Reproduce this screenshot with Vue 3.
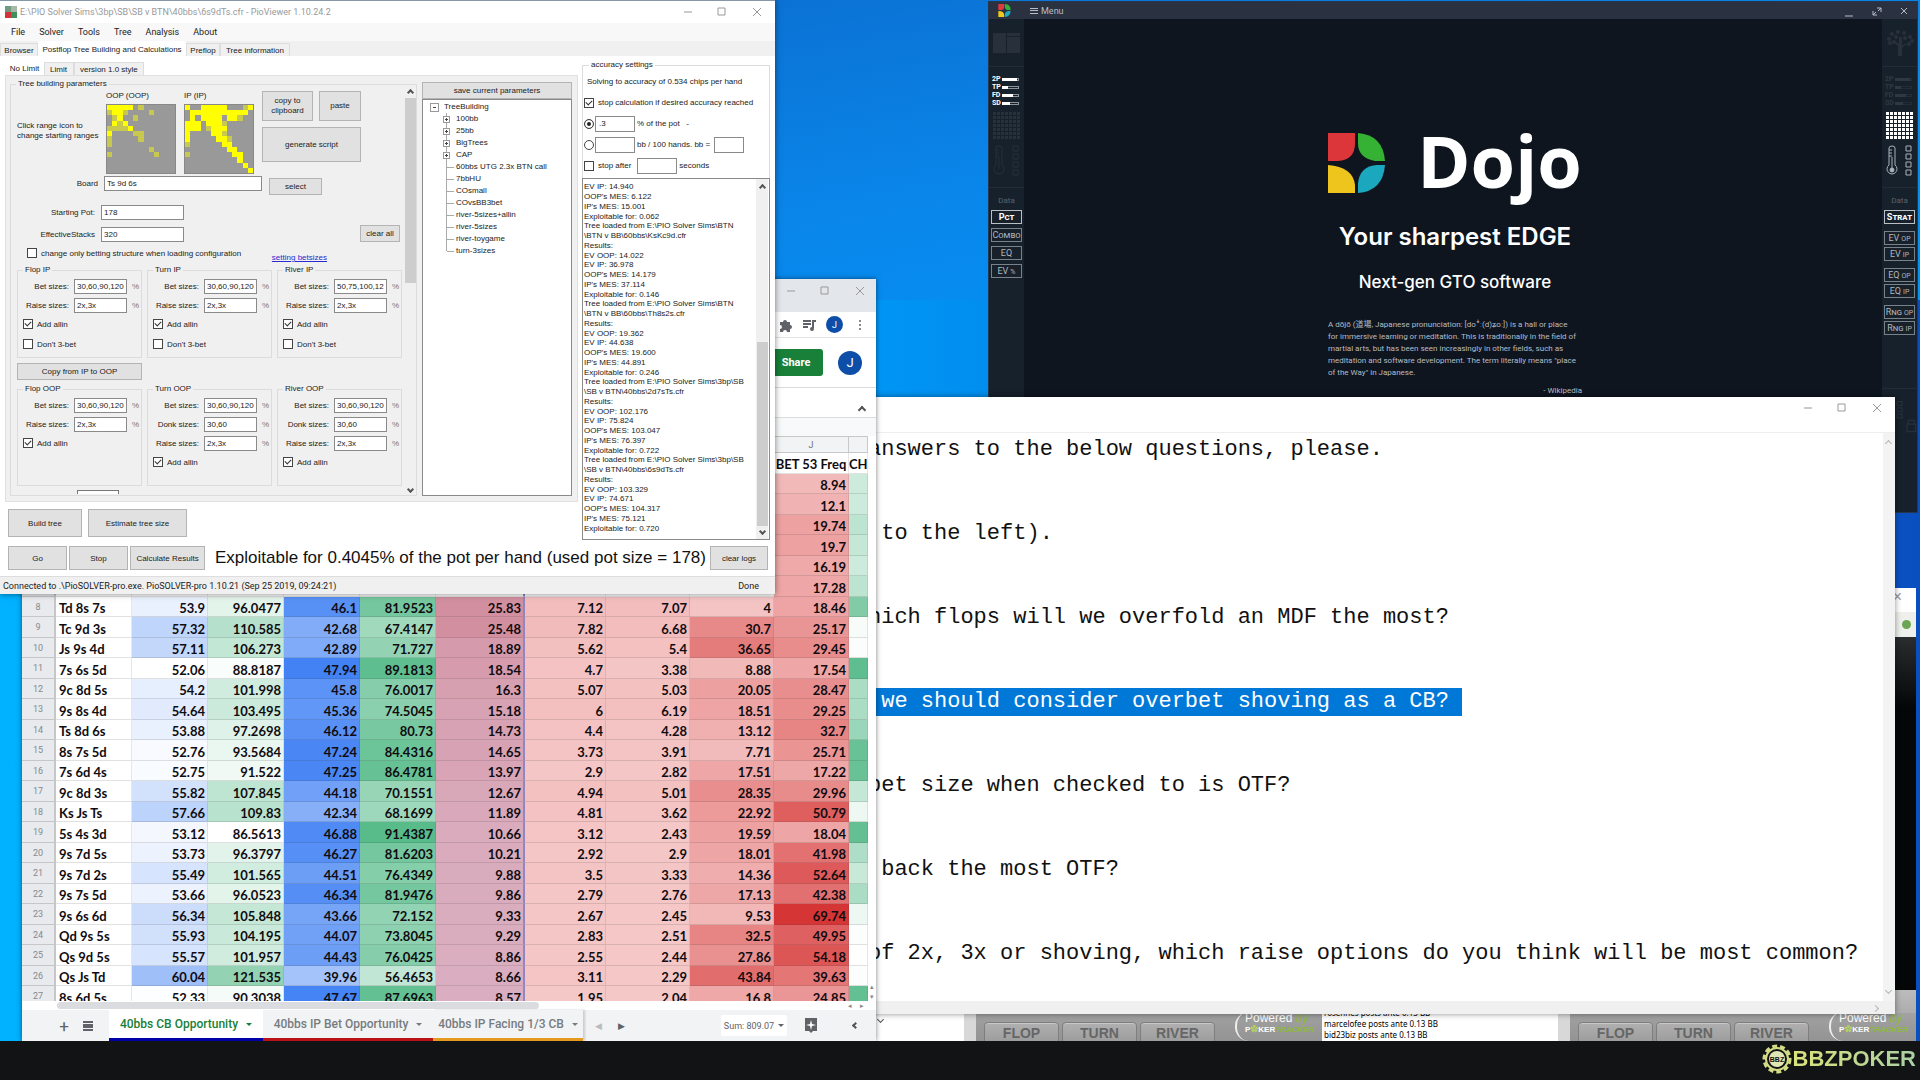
<template>
  <div class="screen">
    <main class="desktop">
      <!-- Dojo -->
      <section class="dojo">
        <header class="dojo-bar">
          <svg class="dojo-mini" viewBox="0 0 57 60">
            <path d="M0 0h27v14q0 14-16 14H0z" fill="#e0393e" />
            <path d="M30 0q27 2 27 28H44Q30 26 30 10z" fill="#35b233" />
            <path d="M0 32q27 0 27 20v8H0z" fill="#f0c71c" />
            <path d="M57 32q-1 26-27 28V50q0-16 16-18z" fill="#1ba9bd" />
          </svg>
          <button class="dojo-menu"><span class="burger"></span>Menu</button>
          <div class="dojo-controls">
            <svg viewBox="0 0 64 14"><path d="M1 12h8" /><path d="M33 4h4v4M37 4l-3 3M29 7v4h4M29 11l3-3" stroke-width="1" /><path d="M59 3l6 6M65 3l-6 6" transform="translate(-2 1)" /></svg>
          </div>
        </header>
        <div class="dojo-body">
          <aside class="side">
            <div class="side-top"><svg viewBox="0 0 28 20" class="dim"><path d="M0 0h13v20H0zM14 0h13v3H14zM14 4h13v16H14z" /></svg></div>
            <div class="side-mid">
              <ul class="strength">
                <li v-for="s in strengths" :key="s.name"><span>{{ s.name }}</span><i><b :style="{ width: s.fill + 'px' }"></b></i></li>
              </ul>
              <div class="matrix dim-matrix"></div>
              <svg class="thermo dim-line" viewBox="0 0 28 31"><path :d="thermoPath" /></svg>
            </div>
            <div class="side-data">
              <p>Data</p>
              <button v-for="(b, i) in leftData" :key="b" class="data-btn" :class="{ active: i === 0 }">{{ b }}<small v-if="b === 'EV'">%</small></button>
            </div>
          </aside>
          <div class="dojo-main">
            <div class="brand">
              <svg viewBox="0 0 57 60">
                <path d="M0 0h27v10q0 17-17 18H0z" fill="#dc363b" />
                <path d="M30 0q25 2 27 28H47Q30 25 30 10z" fill="#35b233" />
                <path d="M0 32q25 2 27 20v8H0z" fill="#eec51d" />
                <path d="M57 32q-2 26-27 28V50q2-17 19-18z" fill="#1ba7bd" />
              </svg>
              <h1>Dojo</h1>
            </div>
            <h2>Your sharpest EDGE</h2>
            <h3>Next-gen GTO software</h3>
            <div class="wiki">
              A dōjō (道場, Japanese pronunciation: [doꜜː(d)ʑoː]) is a hall or place<br>
              for immersive learning or meditation. This is traditionally in the field of<br>
              martial arts, but has been seen increasingly in other fields, such as<br>
              meditation and software development. The term literally means "place<br>
              of the Way" in Japanese.
              <p>- Wikipedia</p>
            </div>
          </div>
          <aside class="side">
            <div class="side-top"><svg viewBox="0 0 28 28" class="dim tree-icon"><path d="M12 27h4v-8l5-4-1-1-4 3V8h-3v7l-5-4-1 1 5 5z" /><circle v-for="(c, i) in leaves" :key="i" :cx="c[0]" :cy="c[1]" r="2" /></svg></div>
            <div class="side-mid">
              <ul class="strength faint">
                <li v-for="s in strengths" :key="s.name"><span>{{ s.name }}</span><i><b :style="{ width: s.fill + 'px' }"></b></i></li>
              </ul>
              <div class="matrix"></div>
              <svg class="thermo" viewBox="0 0 28 31"><path :d="thermoPath" /><circle cx="7" cy="25" r="2" fill="#aab2ba" /></svg>
            </div>
            <div class="side-data right">
              <p>Data</p>
              <button v-for="(b, i) in rightData" :key="b.join()" class="data-btn" :class="{ active: i === 0, spaced: i % 2 === 1 }">{{ b[0] }}<small v-if="b[1]">{{ b[1] }}</small></button>
            </div>
            <div class="side-foot"><svg viewBox="0 0 28 30" fill="none" stroke="#26303b"><path d="M12 2h4v3h-4zM12 7h4v3h-4zM12 12h4v3h-4zM20 20h7v6h-7zM21 20v-3h5v3" /></svg></div>
          </aside>
        </div>
      </section>

      <!-- poker client behind the notes -->
      <section class="client">
        <header>×</header>
        <div class="client-tools"><span></span></div>
        <div class="client-felt"></div>
        <div class="client-base"></div>
      </section>
      <section class="tables">
        <div class="chat narrow"><i class="chev"></i></div>
        <div v-for="n in 2" :key="n" class="table-panel" :class="{ wide: n === 2 }">
          <div class="panel">
            <div class="streets">
              <button>FLOP</button><button>TURN</button><button>RIVER</button>
            </div>
            <div class="powered"><span>Powered <em>by</em></span><strong>P<b>✿</b>KER<em>TRACKER</em></strong></div>
          </div>
          <div v-if="n === 1" class="chat">
            <p>rosennes posts ante 0.13 BB</p>
            <p>marcelofee posts ante 0.13 BB</p>
            <p>bid23biz posts ante 0.13 BB</p>
          </div>
        </div>
      </section>

      <!-- notes -->
      <section class="notes">
        <header class="win-controls">
          <svg viewBox="0 0 80 12"><path d="M1 6h8M35 2h7v7h-7zM70 2l8 8M78 2l-8 8" /></svg>
        </header>
        <div class="notes-body">
          <div class="notes-text">
            <p v-for="(line, i) in notes" :key="i"><mark v-if="i === 3">{{ line }}</mark><template v-else>{{ line }}</template></p>
          </div>
          <div class="notes-scroll"><i class="chev up"></i><i class="chev"></i></div>
        </div>
        <footer><i class="chev side-chev"></i></footer>
      </section>

      <!-- browser -->
      <section class="browser">
        <header class="browser-bar win-controls">
          <svg viewBox="0 0 80 12"><path d="M1 6h8M35 2h7v7h-7zM70 2l8 8M78 2l-8 8" /></svg>
        </header>
        <div class="toolbar">
          <svg viewBox="0 0 14 14" fill="#5f6368"><path d="M2 4h3a2 2 0 1 1 4 0h3v3a2 2 0 1 1 0 4v3H9a2 2 0 0 0-4 0H2v-3a2 2 0 0 0 0-4z" /></svg>
          <svg viewBox="0 0 14 14" fill="none" stroke="#5f6368" stroke-width="2"><path d="M1 3h8M1 6h8M1 9h5M11 10V3h3" /><circle cx="10" cy="11" r="1" /></svg>
          <span class="avatar small">J</span>
          <svg viewBox="0 0 14 14" fill="#5f6368"><circle cx="7" cy="3" r="1" /><circle cx="7" cy="7" r="1" /><circle cx="7" cy="11" r="1" /></svg>
        </div>
        <div class="share-row">
          <button class="share">Share</button>
          <span class="avatar">J</span>
        </div>
        <div class="fold-row"><i class="chev up"></i></div>
        <div class="gap-row"></div>
        <div class="sheet">
          <table>
            <colgroup>
              <col v-for="(w, i) in widths" :key="i" :style="{ width: w + 'px' }">
            </colgroup>
            <thead>
              <tr><th v-for="(c, i) in letters" :key="i">{{ c }}</th></tr>
            </thead>
            <tbody>
              <tr class="labels">
                <th></th>
                <td v-for="n in 9" :key="n"></td>
                <td>BET 53 Freq</td>
                <td class="clip">CH</td>
              </tr>
              <tr v-for="(row, i) in rows" :key="i">
                <th>{{ i > 5 ? i + 2 : '' }}</th>
                <td v-for="(v, c) in row.cells" :key="c" :class="{ hand: c === 0, edge: c === 5 }" :style="{ backgroundColor: shade(c, v) }">{{ v }}</td>
                <td :style="{ backgroundColor: mix(white, green, row.k) }"></td>
              </tr>
            </tbody>
          </table>
          <div class="sheet-scroll"><span>▴</span><span>▾</span></div>
        </div>
        <div class="h-scroll"><div class="thumb"></div><span>◂</span><span>▸</span></div>
        <footer class="sheet-tabs">
          <button class="icon-btn plus">+</button>
          <button class="icon-btn" aria-label="All sheets"><svg viewBox="0 0 10 10"><path d="M0 1h10M0 4h10M0 6h10M0 9h10" stroke="#5f6368" stroke-width="2" /></svg></button>
          <button class="tab blue">40bbs CB Opportunity<i class="caret"></i></button>
          <button class="tab red">40bbs IP Bet Opportunity<i class="caret"></i></button>
          <button class="tab orange">40bbs IP Facing 1/3 CB<i class="caret"></i></button>
          <div class="tab-nav"><span class="off">◀</span><span>▶</span></div>
          <button class="sum">Sum: 809.07<i class="caret"></i></button>
          <svg class="explore" viewBox="0 0 14 16"><path d="M1 0h12v13H9l-2 2-2-2H1z" fill="#5f6368" /><path d="M7 2l1 4 4 1-4 1-1 4-1-4-4-1 4-1z" fill="#fff" /></svg>
          <i class="chev back"></i>
        </footer>
      </section>

      <!-- solver -->
      <section class="pio">
        <header class="pio-title">
          <svg viewBox="0 0 12 12"><path d="M0 0h12v12H0z" fill="#3f8f5c" /><path d="M0 0h6v6H0z" fill="#6d9a80" /><path d="M0 6h6v6H0z" fill="#d3343a" /><path d="M6 0h6v6H6z" fill="#a7b9a6" /></svg>
          <span>E:\PIO Solver Sims\3bp\SB\SB v BTN\40bbs\6s9dTs.cfr - PioViewer 1.10.24.2</span>
          <svg class="controls" viewBox="0 0 80 12"><path d="M1 6h8M35 2h7v7h-7zM70 2l8 8M78 2l-8 8" /></svg>
        </header>
        <nav class="pio-menu">
          <a v-for="m in menu" :key="m" href="#">{{ m }}</a>
        </nav>
        <div class="pio-tabs">
          <button>Browser</button>
          <button class="on">Postflop Tree Building and Calculations</button>
          <button>Preflop</button>
          <button>Tree information</button>
        </div>
        <div class="pio-body">
          <div class="left">
            <div class="sub-tabs">
              <button class="on">No Limit</button>
              <button>Limit</button>
              <button>version 1.0 style</button>
            </div>
            <div class="left-panel">
              <fieldset class="params">
                <legend>Tree building parameters</legend>
                <div class="params-form">
                  <div class="ranges">
                    <p>Click range icon to<br>change starting ranges</p>
                    <div v-for="r in ranges" :key="r.name" class="range">
                      <span>{{ r.name }}</span>
                      <svg viewBox="0 0 13 13" shape-rendering="crispEdges">
                        <template v-for="(line, y) in r.map" :key="y">
                          <template v-for="(ch, x) in line.split('')" :key="x">
                            <rect v-if="ch !== '.'" :x="x" :y="y" width="1" height="1" :fill="ch === 'Y' ? '#ffff00' : '#c8c84e'" />
                          </template>
                        </template>
                      </svg>
                    </div>
                    <div class="range-actions">
                      <button>copy to<br>clipboard</button><button>paste</button>
                      <button class="script">generate script</button>
                    </div>
                  </div>
                  <div class="line board">
                    <label for="board">Board</label><input id="board" value="Ts 9d 6s"><button>select</button>
                  </div>
                  <div class="line pot">
                    <label for="pot">Starting Pot:</label><input id="pot" value="178">
                  </div>
                  <div class="line stacks">
                    <label for="stacks">EffectiveStacks</label><input id="stacks" value="320"><button>clear all</button>
                  </div>
                  <div class="change">
                    <label><input type="checkbox">change only betting structure when loading configuration</label>
                    <a href="#">setting betsizes</a>
                  </div>
                  <template v-for="(set, si) in betSets" :key="si">
                    <button v-if="si === 1" class="copy">Copy from IP to OOP</button>
                    <div class="bets" :class="{ tall: si === 1 }">
                      <fieldset v-for="g in set" :key="g.name" class="bet">
                        <legend>{{ g.name }}</legend>
                        <div v-for="f in g.fields" :key="f[0]" class="bet-row">
                          <label :for="g.name + f[0]">{{ f[0] }} sizes:</label><input :id="g.name + f[0]" :value="f[1]"><span>%</span>
                        </div>
                        <label class="tick"><input type="checkbox" checked>Add allin</label>
                        <label v-if="si === 0" class="tick"><input type="checkbox">Don't 3-bet</label>
                      </fieldset>
                    </div>
                  </template>
                  <div class="cut"></div>
                </div>
                <div class="scroll"><i class="chev up"></i><div class="grip"></div><i class="chev"></i></div>
              </fieldset>
              <div class="saved">
                <button>save current parameters</button>
                <div class="tree">
                  <p class="root">TreeBuilding</p>
                  <p v-for="(t, i) in treeItems" :key="t" :class="{ open: i < 4, last: i === treeItems.length - 1 }"><i></i>{{ t }}</p>
                </div>
              </div>
            </div>
            <div class="actions big"><button>Build tree</button><button>Estimate tree size</button></div>
            <div class="actions"><button>Go</button><button>Stop</button><button>Calculate Results</button><span>Exploitable for 0.4045% of the pot per hand (used pot size = 178)</span></div>
          </div>
          <div class="right-col">
            <fieldset class="accuracy">
              <legend>accuracy settings</legend>
              <p>Solving to accuracy of 0.534 chips per hand</p>
              <label class="acc"><input type="checkbox" checked>stop calculation if desired accuracy reached</label>
              <div class="acc"><input type="radio" name="acc" checked aria-label="percent of pot"><input class="num" value=".3" aria-label="percent"><span>% of the pot&nbsp;&nbsp; -</span></div>
              <div class="acc"><input type="radio" name="acc" aria-label="bb per 100"><input class="num" aria-label="bb"><span>bb / 100 hands. bb =</span><input class="num short" aria-label="bb value"></div>
              <div class="acc"><label><input type="checkbox">stop after</label><input class="num after" aria-label="seconds"><span>seconds</span></div>
            </fieldset>
            <div class="log">
              <div class="log-lines"><p v-for="(l, i) in log" :key="i">{{ l }}</p></div>
              <div class="scroll"><i class="chev up"></i><div class="grip"></div><i class="chev"></i></div>
            </div>
            <button class="clear">clear logs</button>
          </div>
        </div>
        <footer class="pio-status">
          <span>Connected to .\PioSOLVER-pro.exe. PioSOLVER-pro 1.10.21 (Sep 25 2019, 09:24:21)</span>
          <span>Done</span>
        </footer>
      </section>
    </main>

    <footer class="brand-bar">
      <svg viewBox="0 0 30 30">
        <circle cx="15" cy="15" r="13" fill="none" stroke="#d3dc84" stroke-width="3" stroke-dasharray="5 3" />
        <circle cx="15" cy="15" r="11" fill="none" stroke="#d3dc84" stroke-width="2" />
        <circle cx="15" cy="15" r="8" fill="#dfe6b4" />
        <text x="15" y="18" text-anchor="middle">BBZ</text>
      </svg>
      <strong>BBZPOKER</strong>
    </footer>
  </div>
</template>

<script setup>
const menu = ['File', 'Solver', 'Tools', 'Tree', 'Analysis', 'About']

const strengths = [
  { name: '2P', fill: 13 },
  { name: 'TP', fill: 4 },
  { name: 'FD', fill: 9 },
  { name: 'SD', fill: 6 }
]
const leftData = ['Pct', 'Combo', 'EQ', 'EV']
const rightData = [['Strat'], ['EV', 'OP'], ['EV', 'IP'], ['EQ', 'OP'], ['EQ', 'IP'], ['Rng', 'OP'], ['Rng', 'IP']]
const leaves = [[3, 10], [6, 5], [12, 3], [10, 8], [18, 4], [19, 9], [24, 8], [26, 12], [4, 14], [23, 15], [8, 13]]
const thermoPath = 'M4 20V3q0-2 3-2t3 2v17a5 5 0 1 1-6 0M7 12v12M4 5h3M4 8h3M4 11h3M21 1h5v5h-5zM21 9h5v5h-5zM21 17h5v5h-5zM21 25h5v5h-5z'

const notes = [
  'answers to the below questions, please.',
  ' to the left).',
  'hich flops will we overfold an MDF the most?',
  ' we should consider overbet shoving as a CB? ',
  'bet size when checked to is OTF?',
  ' back the most OTF?',
  'of 2x, 3x or shoving, which raise options do you think will be most common?'
]

const ranges = [
  {
    name: 'OOP (OOP)',
    map: [
      'YYYYY.h......',
      'hYYh....h....',
      '.hY..h.......',
      '.YhY.........',
      'hhhhY........',
      'Y....hh......',
      'h.....h......',
      'h............',
      '........h....',
      'h........h...',
      '.............',
      '.............',
      '.............'
    ]
  },
  {
    name: 'IP (IP)',
    map: [
      'Y..YYYYY...hY',
      '.YYYYYYYYYYY.',
      '.Y.YYYY.YYh..',
      'YYY.YYYh.....',
      'YYY.hYYY.....',
      'Y....YYh.....',
      'Y.....YYh....',
      'h......YY....',
      '........YY...',
      'h........YY..',
      '..........Y..',
      '...........Y.',
      '............Y'
    ]
  }
]

const betSets = [
  [
    { name: 'Flop IP', fields: [['Bet', '30,60,90,120'], ['Raise', '2x,3x']] },
    { name: 'Turn IP', fields: [['Bet', '30,60,90,120'], ['Raise', '2x,3x']] },
    { name: 'River IP', fields: [['Bet', '50,75,100,12'], ['Raise', '2x,3x']] }
  ],
  [
    { name: 'Flop OOP', fields: [['Bet', '30,60,90,120'], ['Raise', '2x,3x']] },
    { name: 'Turn OOP', fields: [['Bet', '30,60,90,120'], ['Donk', '30,60'], ['Raise', '2x,3x']] },
    { name: 'River OOP', fields: [['Bet', '30,60,90,120'], ['Donk', '30,60'], ['Raise', '2x,3x']] }
  ]
]

const treeItems = ['100bb', '25bb', 'BigTrees', 'CAP', '60bbs UTG 2.3x BTN call', '7bbHU', 'COsmall', 'COvsBB3bet', 'river-5sizes+allin', 'river-5sizes', 'river-toygame', 'turn-3sizes']

const log = [
  'EV IP: 14.940', "OOP's MES: 6.122", "IP's MES: 15.001", 'Exploitable for: 0.062',
  'Tree loaded from E:\\PIO Solver Sims\\BTN', '\\BTN v BB\\60bbs\\KsKc9d.cfr', 'Results:',
  'EV OOP: 14.022', 'EV IP: 36.978', "OOP's MES: 14.179", "IP's MES: 37.114", 'Exploitable for: 0.146',
  'Tree loaded from E:\\PIO Solver Sims\\BTN', '\\BTN v BB\\60bbs\\Th8s2s.cfr', 'Results:',
  'EV OOP: 19.362', 'EV IP: 44.638', "OOP's MES: 19.600", "IP's MES: 44.891", 'Exploitable for: 0.246',
  'Tree loaded from E:\\PIO Solver Sims\\3bp\\SB', '\\SB v BTN\\40bbs\\2d7sTs.cfr', 'Results:',
  'EV OOP: 102.176', 'EV IP: 75.824', "OOP's MES: 103.047", "IP's MES: 76.397", 'Exploitable for: 0.722',
  'Tree loaded from E:\\PIO Solver Sims\\3bp\\SB', '\\SB v BTN\\40bbs\\6s9dTs.cfr', 'Results:',
  'EV OOP: 103.329', 'EV IP: 74.671', "OOP's MES: 104.317", "IP's MES: 75.121", 'Exploitable for: 0.720'
]

// spreadsheet
const letters = ['', '', '', '', '', '', '', '', '', '', 'J', '']
const widths = [34, 76, 76, 76, 76, 76, 89, 81, 84, 84, 75, 19]

const raw = `
||||||||| 8.94 | .3
||||||||| 12.1 | .3
||||||||| 19.74 | .4
||||||||| 19.7 | .35
||||||||| 16.19 | .3
||||||||| 17.28 | .4
Td 8s 7s|53.9|96.0477|46.1|81.9523|25.83|7.12|7.07|4|18.46|.75
Tc 9d 3s|57.32|110.585|42.68|67.4147|25.48|7.82|6.68|30.7|25.17|.05
Js 9s 4d|57.11|106.273|42.89|71.727|18.89|5.62|5.4|36.65|29.45|.03
7s 6s 5d|52.06|88.8187|47.94|89.1813|18.54|4.7|3.38|8.88|17.54|.95
9c 8d 5s|54.2|101.998|45.8|76.0017|16.3|5.07|5.03|20.05|28.47|.5
9s 8s 4d|54.64|103.495|45.36|74.5045|15.18|6|6.19|18.51|29.25|.5
Ts 8d 6s|53.88|97.2698|46.12|80.73|14.73|4.4|4.28|13.12|32.7|.6
8s 7s 5d|52.76|93.5684|47.24|84.4316|14.65|3.73|3.91|7.71|25.71|.9
7s 6d 4s|52.75|91.522|47.25|86.4781|13.97|2.9|2.82|17.51|17.22|.9
9c 8d 3s|55.82|107.845|44.18|70.1551|12.67|4.94|5.01|28.35|29.96|.35
Ks Js Ts|57.66|109.83|42.34|68.1699|11.89|4.81|3.62|22.92|50.79|.1
5s 4s 3d|53.12|86.5613|46.88|91.4387|10.66|3.12|2.43|19.59|18.04|.92
9s 7d 5s|53.73|96.3797|46.27|81.6203|10.21|2.92|2.9|18.01|41.98|.48
9s 7d 2s|55.49|101.565|44.51|76.4349|9.88|3.5|3.33|14.36|52.64|.33
9s 7s 5d|53.66|96.0523|46.34|81.9476|9.86|2.79|2.76|17.13|42.38|.5
9s 6s 6d|56.34|105.848|43.66|72.152|9.33|2.67|2.45|9.53|69.74|.1
Qd 9s 5s|55.93|104.195|44.07|73.8045|9.29|2.83|2.51|32.5|49.95|.02
Qs 9d 5s|55.57|101.957|44.43|76.0425|8.86|2.55|2.44|27.86|54.18|0
Qs Js Td|60.04|121.535|39.96|56.4653|8.66|3.11|2.29|43.84|39.63|.02
8s 6d 5s|52.33|90.3038|47.67|87.6963|8.57|1.95|2.04|16.8|24.85|.93`

const rows = raw.trim().split('\n').map((l) => {
  const parts = l.split('|').map((p) => p.trim())
  return { cells: parts.slice(0, 10), k: Number(parts[10]) }
})

const white = [255, 255, 255]
const blue = [66, 130, 244]
const green = [87, 187, 138]

function mix(a, b, t) {
  const k = Math.max(0, Math.min(1, t))
  return `rgb(${a.map((v, i) => Math.round(v + (b[i] - v) * k)).join(',')})`
}

// conditional formatting of one cell
function shade(col, value) {
  if (col === 0 || value === '') return '#fff'
  const v = Number(value)
  if (col === 1) return mix(white, blue, (v - 52.2) * 0.065)
  if (col === 2) return mix(white, green, (v - 87) * 0.0186)
  if (col === 3) return mix(white, blue, 1 - (47.9 - v) * 0.065)
  if (col === 4) return mix(white, green, 1 - (91.4 - v) * 0.0183)
  if (col === 5) return mix([222, 190, 208], [190, 62, 76], v / 70)
  return mix([246, 204, 204], [214, 52, 52], v / 70)
}
</script>

<style>
body {
  margin: 0;
  background: #111315;
}
</style>

<style scoped>
* {
  box-sizing: border-box;
}

p,
h1,
h2,
h3,
ul {
  margin: 0;
  padding: 0;
}

button,
input {
  font: inherit;
  color: inherit;
  margin: 0;
  padding: 0;
  border-radius: 0;
}

.screen {
  height: 100vh;
  display: flex;
  flex-direction: column;
  overflow: hidden;
  font-family: "Liberation Sans", "Noto Sans CJK JP", sans-serif;
}

.desktop {
  position: relative;
  flex: 1;
  min-height: 0;
  overflow: hidden;
  background: linear-gradient(90deg, #00b2ff 0, #0096f5 45%, #0a4fc0 100%);
}

.desktop::before {
  content: "";
  position: absolute;
  inset: 0 0 auto 775px;
  height: 300px;
  background: linear-gradient(170deg, #0b72d4, #0a86ea 45%, #0095f8);
}

.chev {
  display: inline-block;
  width: 5px;
  height: 5px;
  border: solid #555;
  border-width: 0 1px 1px 0;
  transform: rotate(45deg);
}

.chev.up {
  transform: rotate(225deg);
}

.win-controls {
  display: flex;
  justify-content: flex-end;
  align-items: flex-start;
}

.win-controls svg,
.controls {
  width: 80px;
  height: 12px;
  fill: none;
  stroke: #999;
}

/* Dojo */
.dojo {
  position: absolute;
  left: 988px;
  right: 2px;
  top: 1px;
  height: 512px;
  display: flex;
  flex-direction: column;
  background: #0e151f;
  border: 1px solid #26374d;
  font-family: Roboto, "Noto Sans CJK JP", sans-serif;
}

.dojo-bar {
  display: flex;
  align-items: center;
  height: 17px;
  background: #2a3140;
  color: #b8bec8;
}

.dojo-mini {
  width: 13px;
  height: 13px;
  margin-left: 9px;
}

.dojo-menu {
  display: flex;
  align-items: center;
  gap: 3px;
  margin-left: 19px;
  border: 0;
  background: none;
  font-size: 9px;
}

.burger {
  width: 8px;
  height: 6px;
  border: solid #b8bec8;
  border-width: 1px 0;
  background: linear-gradient(#b8bec8, #b8bec8) center / 8px 1px no-repeat;
}

.dojo-controls {
  margin-left: auto;
  margin-right: 9px;
}

.dojo-controls svg {
  display: block;
  width: 64px;
  height: 14px;
  fill: none;
  stroke: #b8bec8;
}

.dojo-body {
  flex: 1;
  display: flex;
  min-height: 0;
}

.side {
  width: 35px;
  background: #17212b;
  display: flex;
  flex-direction: column;
}

.side-top {
  height: 48px;
  padding: 14px 0 0 4px;
  border-bottom: 1px solid #222c37;
}

.side-top svg {
  display: block;
  width: 28px;
  height: 20px;
}

.side-top .tree-icon {
  height: 28px;
  margin-top: -4px;
}

.dim {
  fill: #27303b;
}

.side-mid {
  height: 121px;
  padding: 9px 3px 0;
  border-bottom: 1px solid #222c37;
}

.strength {
  list-style: none;
  font-size: 7px;
  font-weight: 700;
  color: #fff;
}

.strength li {
  display: flex;
  align-items: center;
  justify-content: space-between;
  height: 7px;
  line-height: 7px;
  margin-bottom: 1px;
}

.strength i {
  width: 17px;
  height: 3px;
  margin-right: 2px;
  border: 1px solid #8b939b;
}

.strength b {
  display: block;
  height: 1px;
  background: #fff;
  outline: 1px solid #fff;
}

.strength.faint {
  opacity: 0.1;
}

.matrix {
  width: 28px;
  height: 28px;
  margin: 4px 0 6px 1px;
  background: repeating-linear-gradient(0deg, transparent 0 3px, #17212b 3px 4px), repeating-linear-gradient(90deg, #fff 0 3px, #17212b 3px 4px);
}

.matrix.dim-matrix {
  background: repeating-linear-gradient(0deg, transparent 0 3px, #17212b 3px 4px), repeating-linear-gradient(90deg, #27303b 0 3px, #17212b 3px 4px);
}

.thermo {
  display: block;
  width: 28px;
  height: 31px;
  fill: none;
  stroke: #aab2ba;
}

.thermo.dim-line {
  stroke: #27303b;
}

.side-data {
  display: flex;
  flex-direction: column;
  gap: 4px;
  padding: 8px 2px;
  color: #b0b7be;
  height: 200px;
}

.side-data.right {
  gap: 2px;
}

.side-data p {
  height: 10px;
  text-align: center;
  color: #5a636d;
  font-size: 8px;
  line-height: 10px;
}

.side-data.right p {
  margin-bottom: 2px;
}

.data-btn {
  height: 14px;
  border: 1px solid #78828b;
  background: #18202a;
  font-size: 9px;
  line-height: 10px;
  font-variant: small-caps;
  white-space: nowrap;
}

.data-btn small {
  font-size: 7px;
  margin-left: 2px;
}

.data-btn.active {
  color: #fff;
  font-weight: 700;
  border-color: #b8bfc5;
}

.right .data-btn.spaced {
  margin-top: 5px;
}

.side-foot {
  border-top: 1px solid #222c37;
  padding-top: 10px;
}

.dojo-main {
  flex: 1;
  display: flex;
  flex-direction: column;
  align-items: center;
  padding: 102px 0 0 4px;
  color: #fff;
}

.brand {
  display: flex;
  align-items: center;
  gap: 32px;
  height: 86px;
}

.brand svg {
  width: 57px;
  height: 60px;
  margin-bottom: 2px;
}

.brand h1 {
  margin-bottom: 8px;
  font: 700 72px/86px "Open Sans", sans-serif;
}

h2 {
  margin-top: 14px;
  font: 600 24px/32px Inter, sans-serif;
}

h3 {
  margin-top: 17px;
  font: 500 17px/24px Inter, sans-serif;
}

.wiki {
  width: 254px;
  margin-top: 25px;
  font-size: 8px;
  line-height: 12px;
  color: #b7bcc4;
  white-space: nowrap;
}

.wiki p {
  margin-top: 6px;
  text-align: right;
}

/* poker client */
.client {
  position: absolute;
  right: 4px;
  top: 588px;
  bottom: 0;
  width: 40px;
  display: flex;
  flex-direction: column;
}

.client header {
  height: 24px;
  padding-right: 14px;
  background: #fff;
  color: #999;
  text-align: right;
  font-size: 16px;
}

.client-tools {
  height: 25px;
  padding: 8px 5px;
  display: flex;
  justify-content: flex-end;
  background: #eef0ec;
}

.client-tools span {
  width: 9px;
  height: 9px;
  border-radius: 50%;
  background: #69a552;
}

.client-felt {
  flex: 1;
  background: linear-gradient(#2a2c2e, #050607 20%);
}

.client-base {
  height: 51px;
  background: linear-gradient(#bcbcbc, #9a9a9a);
}

.tables {
  position: absolute;
  left: 876px;
  right: 4px;
  bottom: 0;
  height: 28px;
  display: flex;
}

.table-panel {
  display: flex;
}

.table-panel.wide {
  flex: 1;
}

.panel {
  width: 346px;
  padding: 9px 8px 0;
  display: flex;
  gap: 20px;
  overflow: hidden;
  background: linear-gradient(#a2a2a2, #939393);
}

.streets {
  display: flex;
  gap: 3px;
}

.streets button {
  width: 75px;
  height: 22px;
  border: 1px solid #7e7e7e;
  border-radius: 4px 4px 0 0;
  background: linear-gradient(#b0b0b0, #9b9b9b);
  box-shadow: inset 0 1px #c8c8c8;
  color: #666;
  font-weight: 700;
  font-size: 14px;
}

.powered {
  display: flex;
  flex-direction: column;
  flex: none;
  margin-top: -10px;
  padding-left: 8px;
  border-left: 2px solid #eee;
  border-radius: 14px 0 0 14px;
  color: #fff;
  font-size: 12px;
  line-height: 12px;
}

.powered em {
  color: #8fb93d;
}

.powered strong {
  font-size: 8px;
}

.powered strong b {
  color: #b8d65a;
}

.chat {
  width: 248px;
  padding-left: 2px;
  background: #fff;
  overflow: hidden;
  font: 8px/11px "Noto Sans", sans-serif;
  border-right: 12px solid #d8d8d8;
}

.chat p:first-child {
  margin-top: -6px;
}

.chat.narrow {
  width: 104px;
}

/* notes */
.notes {
  position: absolute;
  left: 860px;
  right: 25px;
  top: 397px;
  bottom: 27px;
  display: flex;
  flex-direction: column;
  background: #fff;
  box-shadow: 0 0 6px rgba(0, 0, 0, 0.45);
}

.notes header {
  height: 36px;
  padding: 5px 12px 0;
  border-bottom: 1px solid #eee;
}

.notes-body {
  flex: 1;
  display: flex;
  min-height: 0;
}

.notes-text {
  flex: 1;
  padding: 3px 0 0 8px;
  overflow: hidden;
  font: 22px/28px "Liberation Mono", monospace;
  color: #111;
  white-space: pre;
}

.notes-text p {
  height: 28px;
  margin-bottom: 56px;
}

.notes-text mark {
  display: inline-block;
  background: #0078d7;
  color: #fff;
}

.notes-scroll {
  width: 12px;
  padding: 8px 3px;
  background: #f3f3f3;
  display: flex;
  flex-direction: column;
  justify-content: space-between;
}

.notes-scroll .chev,
.notes footer .chev {
  border-color: #b5b5b5;
}

.notes footer {
  height: 13px;
  padding-right: 17px;
  line-height: 9px;
  text-align: right;
  background: #f0f0f0;
}

.side-chev {
  transform: rotate(-45deg);
}

/* browser */
.browser {
  position: absolute;
  left: 22px;
  top: 279px;
  bottom: 0;
  width: 854px;
  display: flex;
  flex-direction: column;
  background: #fff;
  box-shadow: 0 0 5px rgba(0, 0, 0, 0.5);
  font-family: Roboto, sans-serif;
}

.browser-bar {
  height: 33px;
  padding: 6px 10px 0;
  background: #e3e6ea;
}

.toolbar {
  height: 26px;
  display: flex;
  align-items: center;
  justify-content: flex-end;
  gap: 10px;
  padding-right: 9px;
  border-bottom: 1px solid #e4e4e4;
}

.toolbar svg {
  width: 14px;
  height: 14px;
}

.avatar {
  display: grid;
  place-items: center;
  width: 24px;
  height: 24px;
  border-radius: 50%;
  background: #0d4fa8;
  color: #fff;
  font-size: 13px;
}

.avatar.small {
  width: 17px;
  height: 17px;
  font-size: 9px;
}

.share-row {
  height: 50px;
  display: flex;
  align-items: center;
  justify-content: flex-end;
  gap: 15px;
  padding-right: 14px;
  border-bottom: 1px solid #dcdcdc;
}

.share {
  width: 76px;
  height: 27px;
  padding-left: 22px;
  border: 0;
  border-radius: 3px;
  background: #188038;
  color: #fff;
  font: 700 11px Roboto, sans-serif;
}

.fold-row {
  height: 30px;
  padding: 10px 11px 0;
  text-align: right;
  border-bottom: 1px solid #dcdcdc;
}

.fold-row .chev {
  width: 6px;
  height: 6px;
  border-width: 0 2px 2px 0;
}

.gap-row {
  height: 18px;
  background: #f8f9fa;
}

.sheet {
  flex: 1;
  min-height: 0;
  display: flex;
  overflow: hidden;
}

table {
  width: 846px;
  table-layout: fixed;
  border-collapse: separate;
  border-spacing: 0;
}

thead th {
  height: 17px;
  padding: 0;
  border: solid #c8c8c8;
  border-width: 1px 1px 1px 0;
  background: #f1f3f4;
  color: #70757a;
  font-size: 9px;
  font-weight: 400;
}

tbody tr {
  height: 20px;
}

tbody tr:nth-child(odd) {
  height: 21px;
}

tbody th {
  padding: 0;
  border-right: 2px solid #c4c6c8;
  border-bottom: 1px solid #c4c6c8;
  background: #e8eaed;
  color: #85898d;
  font-size: 9px;
  font-weight: 400;
}

td {
  padding: 3px 2px 0;
  border-right: 1px solid rgba(60, 60, 60, 0.12);
  border-bottom: 1px solid rgba(60, 60, 60, 0.15);
  text-align: right;
  white-space: nowrap;
  font: 700 13px/16px Lato, sans-serif;
  color: #100c10;
}

td.hand {
  padding-left: 3px;
  text-align: left;
}

td.edge {
  border-right: 2px solid #9186c0;
}

.labels td {
  font-size: 13px;
  padding: 2px 0 0;
  text-align: center;
}

.labels .clip {
  overflow: hidden;
}

.sheet-scroll {
  flex: 1;
  display: flex;
  flex-direction: column;
  justify-content: flex-end;
  align-items: center;
  gap: 2px;
  font-size: 7px;
  color: #888;
}

.h-scroll {
  height: 9px;
  display: flex;
  align-items: center;
  gap: 8px;
  padding: 0 12px 0 35px;
  font-size: 7px;
  color: #888;
}

.thumb {
  width: 482px;
  height: 7px;
  margin-right: auto;
  border-radius: 4px;
  background: #dadce0;
}

.sheet-tabs {
  height: 31px;
  display: flex;
  align-items: center;
  background: #f1f3f4;
  color: #5f6368;
}

.icon-btn {
  width: 24px;
  border: 0;
  background: none;
}

.icon-btn svg {
  width: 10px;
  height: 10px;
}

.icon-btn.plus {
  margin-left: 30px;
  font-size: 17px;
}

.icon-btn + .tab {
  margin-left: 9px;
}

.tab {
  height: 31px;
  display: flex;
  align-items: center;
  justify-content: center;
  gap: 8px;
  border: 0;
  border-bottom: 3px solid;
  background: none;
  font: 500 12px Roboto, sans-serif;
}

.tab.blue {
  width: 154px;
  background: #fff;
  color: #188038;
  border-color: #0000a8;
}

.tab.red {
  width: 170px;
  color: #777c80;
  border-color: #bb1218;
}

.tab.orange {
  width: 150px;
  color: #777c80;
  border-color: #e39a1e;
  box-shadow: 2px 0 2px #ccc;
}

.caret {
  border: 3px solid transparent;
  border-top-color: currentColor;
  border-bottom: 0;
}

.tab-nav {
  display: flex;
  gap: 16px;
  padding-left: 12px;
  font-size: 9px;
}

.tab-nav .off {
  color: #bbb;
}

.sum {
  width: 66px;
  height: 21px;
  margin-left: auto;
  display: flex;
  align-items: center;
  justify-content: center;
  gap: 4px;
  border: 0;
  border-radius: 2px;
  background: #fff;
  font-size: 9px;
  white-space: nowrap;
}

.explore {
  width: 14px;
  height: 16px;
  margin-left: 17px;
}

.back {
  margin: 0 18px 0 35px;
  border-width: 0 2px 2px 0;
  transform: rotate(135deg);
}

/* solver */
.pio {
  position: absolute;
  left: 0;
  top: 0;
  width: 775px;
  height: 594px;
  display: flex;
  flex-direction: column;
  background: #fff;
  border-top: 1px solid #8796a5;
  box-shadow: 0 0 6px rgba(0, 0, 0, 0.5);
  font-size: 8px;
  color: #222;
}

.pio button {
  border: 1px solid #b4b4b4;
  background: #e1e1e1;
  white-space: nowrap;
}

.pio-title {
  height: 22px;
  display: flex;
  align-items: center;
  gap: 3px;
  padding: 0 12px 0 5px;
  color: #999;
  font: 9px/12px Roboto, sans-serif;
}

.pio-title svg {
  width: 12px;
  height: 12px;
}

.pio-title .controls {
  width: 80px;
  margin-left: auto;
}

.pio-menu {
  height: 18px;
  display: flex;
  align-items: center;
  gap: 14px;
  padding-left: 11px;
  background: #f8f8f8;
  font: 9px/12px Roboto, sans-serif;
}

.pio-menu a {
  color: #222;
  text-decoration: none;
}

.pio-tabs,
.sub-tabs {
  display: flex;
  align-items: flex-end;
}

.pio-tabs {
  height: 15px;
  background: #f0f0f0;
}

.pio .pio-tabs button,
.pio .sub-tabs button {
  height: 13px;
  padding: 0 5px;
  border: 1px solid #ddd;
  border-bottom: 0;
  background: #f0f0f0;
}

.pio .pio-tabs button.on,
.pio .sub-tabs button.on {
  height: 15px;
  background: #fff;
  border-color: #fff;
}

.pio .pio-tabs button:nth-child(1) {
  width: 38px;
  padding: 0;
}

.pio .pio-tabs button:nth-child(2) {
  width: 148px;
  padding: 0;
}

.pio .pio-tabs button:nth-child(3) {
  width: 34px;
  padding: 0;
}

.pio-body {
  flex: 1;
  display: flex;
  gap: 4px;
  padding: 4px 5px 0;
  min-height: 0;
}

.left {
  width: 573px;
}

.sub-tabs {
  height: 15px;
}

.pio .sub-tabs button:nth-child(1) {
  width: 39px;
  padding: 0;
}

.pio .sub-tabs button:nth-child(2) {
  width: 30px;
  text-align: left;
}

.left-panel {
  height: 427px;
  display: flex;
  gap: 5px;
  padding: 3px 5px 5px 4px;
  border: 1px solid #e0e0e0;
  background: #f0f0f0;
}

fieldset {
  min-width: 0;
  margin: 0;
  padding: 0;
  border: 1px solid #dcdcdc;
}

legend {
  margin-left: 5px;
  padding: 0 2px;
  line-height: 10px;
}

.params {
  width: 407px;
  height: 417px;
}

.params legend {
  margin-bottom: -10px;
}

.params-form {
  float: left;
  width: 391px;
  padding: 8px 0 0 6px;
}

.params > .scroll {
  float: right;
  height: 402px;
  margin-top: 10px;
}

.scroll {
  width: 12px;
  display: flex;
  flex-direction: column;
  align-items: center;
}

.scroll .chev {
  border-width: 0 2px 2px 0;
  flex: none;
}

.scroll .grip {
  width: 11px;
  background: #cdcdcd;
}

.params .grip {
  height: 185px;
  margin: 3px 0 auto;
}

.ranges {
  display: flex;
  height: 88px;
}

.ranges p {
  width: 89px;
  padding-top: 33px;
  line-height: 10px;
  white-space: nowrap;
}

.range {
  width: 78px;
  padding-top: 3px;
}

.range span {
  display: block;
  line-height: 10px;
  margin-bottom: 3px;
}

.range svg {
  display: block;
  width: 70px;
  height: 70px;
  background: #999;
  border: 1px solid #888;
}

.range-actions {
  display: grid;
  grid-template-columns: 51px 42px;
  grid-template-rows: 30px 35px;
  gap: 6px;
  padding-top: 3px;
}

.range-actions button {
  line-height: 10px;
}

.range-actions .script {
  grid-column: span 2;
}

.line {
  display: flex;
  align-items: center;
  height: 22px;
}

.line label {
  width: 78px;
  margin-right: 6px;
  text-align: right;
}

.line input {
  width: 83px;
  height: 15px;
  padding: 0 2px;
  border: 1px solid #8a8a8a;
  background: #fff;
}

.board {
  align-items: flex-start;
  height: 25px;
}

.board label {
  width: 81px;
  line-height: 15px;
}

.board input {
  width: 158px;
}

.board button {
  width: 53px;
  height: 17px;
  margin: 2px 0 0 7px;
}

.stacks button {
  width: 40px;
  height: 17px;
  margin: -2px 2px 0 auto;
}

.change {
  display: flex;
  justify-content: space-between;
  height: 20px;
  padding: 2px 75px 0 10px;
}

.change label,
.tick,
.acc label,
label.acc {
  display: flex;
  align-items: center;
  gap: 4px;
  white-space: nowrap;
}

.change label {
  height: 12px;
}

.change a {
  margin-top: 6px;
  color: #2a2ad0;
  line-height: 10px;
}

input[type="checkbox"],
input[type="radio"] {
  appearance: none;
  flex: none;
  width: 10px;
  height: 10px;
  border: 1px solid #444;
  background: #fff;
}

input[type="checkbox"]:checked::after {
  content: "";
  display: block;
  width: 5px;
  height: 3px;
  margin: 1px;
  border: solid #333;
  border-width: 0 0 1px 1px;
  transform: rotate(-45deg);
}

input[type="radio"] {
  border-radius: 50%;
}

input[type="radio"]:checked {
  background: #222;
  box-shadow: inset 0 0 0 2px #fff;
}

.bets {
  display: flex;
  gap: 5px;
}

.bet {
  width: 125px;
  height: 93px;
}

.tall .bet {
  height: 102px;
}

/* .params legend pulls its rows up, these must not */
.params .bet legend {
  margin-bottom: 4px;
}

.bet-row {
  display: flex;
  align-items: center;
  height: 15px;
  margin-bottom: 4px;
}

.bet-row label {
  width: 51px;
  margin-right: 5px;
  text-align: right;
  white-space: nowrap;
}

.bet-row input {
  width: 53px;
  height: 15px;
  padding: 0 2px;
  border: 1px solid #8a8a8a;
}

.bet-row span {
  margin-left: 5px;
  color: #777;
}

.tick {
  height: 14px;
  margin: 0 0 6px 5px;
}

.copy {
  width: 125px;
  height: 17px;
  margin: 5px 0 4px;
  display: block;
}

.cut {
  width: 42px;
  height: 4px;
  margin: 4px 0 0 60px;
  border: 1px solid #777;
  border-bottom: 0;
  background: #fff;
}

.saved {
  flex: 1;
  display: flex;
  flex-direction: column;
  padding-top: 3px;
}

.saved button {
  height: 17px;
}

.tree {
  flex: 1;
  padding: 1px 0 0 7px;
  border: 1px solid #8a8a8a;
  background: #fff;
}

.tree p {
  height: 12px;
  display: flex;
  align-items: center;
  margin-left: 16px;
  border-left: 1px solid #aaa;
  line-height: 12px;
}

.tree p.root {
  margin-left: 0;
  border: 0;
  gap: 5px;
}

.tree .root::before {
  content: "";
  width: 7px;
  height: 7px;
  border: 1px solid #999;
  background: linear-gradient(#444, #444) center / 3px 1px no-repeat;
}

.tree i {
  width: 7px;
  height: 1px;
  margin-right: 2px;
  background: #aaa;
}

.tree .open i {
  width: 7px;
  height: 7px;
  margin-left: -4px;
  margin-right: 6px;
  border: 1px solid #999;
  background: linear-gradient(#444, #444) center / 3px 1px no-repeat, linear-gradient(#444, #444) center / 1px 3px no-repeat, #fff;
}

.tree .last {
  border-image: linear-gradient(#aaa 50%, #fff 50%) 1;
}

.actions {
  display: flex;
  gap: 2px;
  padding: 9px 0 0 3px;
}

.actions button {
  flex: none;
  width: 59px;
  height: 24px;
}

.actions button:nth-child(3) {
  width: 75px;
}

.actions.big {
  gap: 6px;
  padding-top: 7px;
}

.actions.big button {
  width: 74px;
  height: 28px;
}

.actions.big button:nth-child(2) {
  width: 99px;
}

.actions span {
  margin-left: 8px;
  font-size: 17px;
  line-height: 24px;
  white-space: nowrap;
  color: #111;
}

.right-col {
  width: 188px;
  display: flex;
  flex-direction: column;
}

.accuracy {
  height: 118px;
  padding-left: 1px;
  border-bottom: 0;
}

.accuracy p {
  height: 22px;
  padding-left: 3px;
  line-height: 24px;
}

.acc {
  display: flex;
  align-items: center;
  height: 21px;
}

.acc span {
  margin-left: 2px;
  white-space: nowrap;
}

.num {
  width: 40px;
  height: 16px;
  margin-left: 1px;
  padding: 0 3px;
  border: 1px solid #8a8a8a;
}

.num.short {
  width: 30px;
  margin-left: 4px;
}

.num.after {
  margin-left: 6px;
}

.log {
  height: 362px;
  display: flex;
  border: 1px solid #8a8a8a;
  background: #fff;
}

.log-lines {
  flex: 1;
  padding: 3px 1px;
  white-space: nowrap;
}

.log-lines p {
  height: 10px;
  line-height: 10px;
}

.log-lines p:nth-child(4n) {
  height: 9px;
}

.log .scroll {
  margin-right: 1px;
  padding: 6px 0 5px;
  background: #f0f0f0;
}

.log .grip {
  height: 184px;
  margin: auto 0 3px;
}

.pio .clear {
  width: 58px;
  height: 24px;
  margin: 6px 2px 0 auto;
}

.pio-status {
  height: 18px;
  display: flex;
  justify-content: space-between;
  align-items: center;
  padding: 0 16px 0 3px;
  border-top: 1px solid #ddd;
  background: #f0f0f0;
  font: 9px/12px Roboto, sans-serif;
}

/* bottom strip */
.brand-bar {
  height: 39px;
  display: flex;
  align-items: center;
  justify-content: flex-end;
  gap: 1px;
  padding: 0 4px 4px 0;
  background: #111315;
}

.brand-bar svg {
  width: 30px;
  height: 30px;
}

.brand-bar text {
  font: 700 7px "Liberation Sans", sans-serif;
  fill: #111;
}

.brand-bar strong {
  font: 700 22px/32px "Liberation Sans", sans-serif;
  color: transparent;
  background: linear-gradient(90deg, #dbe27c, #a9cfa4);
  background-clip: text;
}
</style>
